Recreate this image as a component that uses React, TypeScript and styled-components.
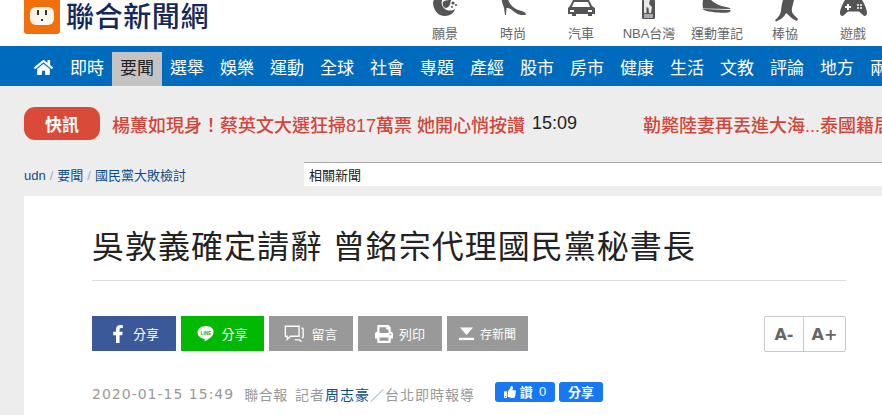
import React from 'react';
import styled, { createGlobalStyle } from 'styled-components';
import { FaHome, FaFacebookF, FaPrint, FaThumbsUp } from 'react-icons/fa';

const CJK = `"Noto Sans CJK TC", "Noto Sans", sans-serif`;

const GlobalStyle = createGlobalStyle`
  html, body {
    margin: 0;
    padding: 0;
    width: 882px;
    height: 415px;
    overflow: hidden;
    background: #ededed;
    font-family: "Liberation Sans", ${CJK};
  }
`;

const Page = styled.div`
  width: 882px;
  height: 415px;
  overflow: hidden;
`;

const Header = styled.header`
  display: flex;
  height: 46px;
  background: #fff;
  overflow: hidden;
`;

const Logo = styled.a`
  display: flex;
  align-items: flex-start;
  gap: 6px;
  flex: none;
  box-sizing: border-box;
  width: 411px;
  padding-left: 24px;
`;

const LogoMark = styled.div`
  display: flex;
  align-items: center;
  justify-content: center;
  width: 36px;
  height: 36px;
  margin-top: -2px;
  background: #f26f0e;
  border-radius: 3px;
`;

const LogoText = styled.span`
  margin-top: -1px;
  font-family: ${CJK};
  font-size: 28px;
  font-weight: 500;
  line-height: 32px;
  letter-spacing: 0.6px;
  color: #14285c;
`;

const Channels = styled.nav`
  display: flex;
  flex: none;
`;

const Channel = styled.a`
  display: flex;
  flex-direction: column;
  align-items: center;
  flex: none;
  width: 68px;
  height: 46px;
`;

const ChannelIcon = styled.svg.attrs({ width: 34, height: 25, viewBox: '0 0 34 25' })`
  display: block;
  flex: none;
  fill: #555;
`;

const ChannelLabel = styled.span`
  font-family: "Liberation Sans", ${CJK};
  font-size: 13px;
  line-height: 18px;
  color: #666;
  white-space: nowrap;
`;

const NavBar = styled.nav`
  display: flex;
  align-items: flex-end;
  height: 40px;
  padding-left: 24px;
  background: #006bbd;
  overflow: hidden;
`;

const HomeLink = styled.a`
  display: flex;
  align-items: center;
  justify-content: center;
  flex: none;
  width: 38px;
  height: 31px;
  padding-bottom: 3px;
  color: #fff;
  font-size: 19px;
`;

const NavItem = styled.a<{ $active?: boolean }>`
  flex: none;
  width: 50px;
  height: 34px;
  font-family: ${CJK};
  font-size: 17px;
  line-height: 29px;
  text-align: center;
  color: ${({ $active }) => ($active ? '#222' : '#fff')};
  background: ${({ $active }) => ($active ? '#c4c4c4' : 'transparent')};
`;

const Flash = styled.div`
  display: flex;
  align-items: center;
  height: 33px;
  margin-top: 21px;
  padding-left: 24px;
  white-space: nowrap;
  overflow: hidden;
`;

const FlashBadge = styled.span`
  flex: none;
  width: 76px;
  height: 33px;
  margin-right: 12px;
  border-radius: 11px;
  background: #d94b38;
  font-family: ${CJK};
  font-size: 17px;
  font-weight: 700;
  line-height: 33px;
  text-align: center;
  color: #fff;
`;

const FlashLink = styled.a`
  flex: none;
  font-family: "Liberation Sans", ${CJK};
  font-size: 18px;
  font-weight: 500;
  color: #d1453a;
`;

const FlashTime = styled.span`
  flex: none;
  margin: 0 66px 0 7px;
  font-size: 18px;
  color: #222;
`;

const CrumbRow = styled.div`
  display: flex;
  align-items: center;
  height: 24px;
  margin-top: 22px;
  padding-left: 24px;
`;

const Crumbs = styled.div`
  flex: none;
  width: 280px;
  font-family: "Liberation Sans", ${CJK};
  font-size: 13px;
  color: #0b4d8c;
`;

const Sep = styled.span`
  margin: 0 4px;
  color: #aaa;
`;

const Related = styled.div`
  flex: 1;
  height: 23px;
  padding-left: 5px;
  background: #fff;
  border-top: 1px solid #aaa;
  font-family: ${CJK};
  font-size: 13px;
  line-height: 23px;
  color: #222;
`;

const Card = styled.main`
  margin: 10px 0 0 24px;
  height: 219px;
  padding: 0 36px 0 68px;
  background: #fff;
`;

const Title = styled.h1`
  margin: 0;
  padding: 28px 0 16px;
  border-bottom: 1px solid #ddd;
  font-family: ${CJK};
  font-size: 32px;
  font-weight: 400;
  line-height: 40px;
  letter-spacing: 1px;
  word-spacing: 1.5px;
  color: #222;
  white-space: nowrap;
`;

const Toolbar = styled.div`
  display: flex;
  align-items: flex-start;
  margin-top: 35px;
`;

const ShareButton = styled.a<{ $bg: string; $w: number; $small?: boolean }>`
  display: flex;
  align-items: center;
  justify-content: center;
  gap: 6px;
  flex: none;
  width: ${({ $w }) => $w}px;
  height: 35px;
  margin-right: 5px;
  background: ${({ $bg }) => $bg};
  font-family: ${CJK};
  font-size: ${({ $small }) => ($small ? 12 : 13)}px;
  color: #fff;
`;

const FontSizer = styled.div`
  display: flex;
  margin-left: auto;
  width: 80px;
  height: 34px;
  border: 1px solid #c8c8c8;
  border-radius: 2px;
`;

const FontBtn = styled.button<{ $w: number; $divider?: boolean }>`
  flex: none;
  width: ${({ $w }) => $w}px;
  padding: 0;
  border: 0;
  border-left: ${({ $divider }) => ($divider ? '1px solid #c8c8c8' : '0')};
  background: none;
  font-family: "DejaVu Sans", sans-serif;
  font-size: 16px;
  font-weight: 700;
  color: #666;
`;

const Meta = styled.div`
  display: flex;
  align-items: flex-start;
  height: 24px;
  margin-top: 30px;
  font-family: ${CJK};
  font-size: 14px;
  line-height: 24px;
  color: #999;
  white-space: nowrap;
`;

const Date = styled.span`
  margin-right: 10px;
  font-family: "DejaVu Sans", sans-serif;
  font-size: 14px;
  letter-spacing: 1px;
`;

const MetaSource = styled.span`
  margin-right: 7px;
  letter-spacing: 0.6px;
`;

const Reporter = styled.span`
  letter-spacing: 1px;
`;

const ReporterName = styled.a`
  color: #0b4d8c;
`;

const FbButton = styled.a<{ $w: number; $left: number }>`
  display: flex;
  align-items: center;
  justify-content: center;
  gap: 4px;
  flex: none;
  width: ${({ $w }) => $w}px;
  height: 20px;
  margin-left: ${({ $left }) => $left}px;
  border-radius: 3px;
  background: #1877f2;
  font-size: 13px;
  font-weight: 700;
  line-height: 20px;
  color: #fff;
`;

const FbCount = styled.span`
  margin-left: 2px;
  font-weight: 400;
  font-family: "Liberation Sans", sans-serif;
`;

const navItems = ['即時', '要聞', '選舉', '娛樂', '運動', '全球', '社會', '專題', '產經', '股市', '房市', '健康', '生活', '文教', '評論', '地方', '兩岸'];

const VisionIcon = () => (
  <ChannelIcon>
    <path d="M5 2c0 8 5 14 12 14 5 0 9-3 10-7-3 2-7 2-10 0-3-2-4-5-3-9H6z" />
    <path d="M15 2c2-2 6-2 8-2-1 4-1 7-5 8-2 0-4-3-3-6z" />
    <circle cx="25" cy="3" r="1.600" />
    <circle cx="28" cy="5" r="1.100" />
    <circle cx="24" cy="7" r="1" />
  </ChannelIcon>
);

const HeelIcon = () => (
  <ChannelIcon>
    <path d="M5.700 0h6.600c1.700 5 5.700 9 11.700 10.500 4 .8 6 2.500 6 4.200-4 .8-7 .3-10-1.700-3-2-6-5-8-5h-1.500L10 15H9L8 8C7 5 6 2 5.700 0z" />
  </ChannelIcon>
);

const CarIcon = () => (
  <ChannelIcon>
    <path d="M9 0h16l3 6 3 2v6h-3v2h-4v-2H12v2H8v-2H4V8l2-2z" />
    <path fill="#fff" d="M10 2h14l2 5H8zM6 10h4v2H6zM24 10h4v2h-4z" />
  </ChannelIcon>
);

const NbaIcon = () => (
  <ChannelIcon>
    <rect x="10" y="0" width="13" height="19" rx="1" fill="#555" />
    <path fill="#e8e8e8" d="M12 0h6l-1 4 3 3-1 6h-2l-.5-5-2-1v6h-2.500z" />
    <rect x="12" y="14" width="9" height="4" fill="#aaa" />
  </ChannelIcon>
);

const SneakerIcon = () => (
  <ChannelIcon>
    <path d="M3 0h8c3 3 9 6 15 7 3 .5 4 1 4.500 2L3 8.500C2.500 6 2.500 3 3 0z" />
    <path d="M2.300 9l28.400 1c0 2-1.700 2.500-4.700 2.700-7 .3-16-.7-21-2.200z" />
  </ChannelIcon>
);

const BatterIcon = () => (
  <ChannelIcon>
    <path d="M15 0h11l-2 8c-.5 3 0 5 2 7l4 4-1 2c-3-1-6-3-8.500-6L18 13c-1.500 4-6 7-10 8.500L7 20c3-2 5.500-6 6-9 .5-5 1-8 2-11z" />
  </ChannelIcon>
);

const GameIcon = () => (
  <ChannelIcon>
    <path d="M9 0h17c2 3 5 9 5 13 0 2.500-2 3.500-3.500 2.500L23 11.500H12l-4.500 4C6 16.500 4 15.500 4 13c0-4 3-10 5-13z" />
    <path fill="#fff" d="M11 4h2v2h2v2h-2v2h-2V8H9V6h2z" />
    <g fill="#fff">
      <circle cx="22" cy="5" r="1" />
      <circle cx="25" cy="5" r="1" />
      <circle cx="22" cy="8" r="1" />
      <circle cx="25" cy="8" r="1" />
    </g>
  </ChannelIcon>
);

const PlugFace = () => (
  <svg width="24" height="18" viewBox="0 0 24 18">
    <rect x="0" y="0" width="24" height="18" rx="6" fill="#fbf4ea" />
    <rect x="7" y="3" width="2" height="5" fill="#333" />
    <rect x="15" y="3" width="2" height="5" fill="#333" />
    <rect x="11" y="12" width="2" height="2" fill="#333" />
  </svg>
);

const LineIcon = () => (
  <svg width="18" height="18" viewBox="0 0 17 17">
    <path fill="#fff" d="M8.500 1C4 1 .5 3.700.5 7.200c0 3 2.700 5.400 6.200 5.900.8.200.5 1 .4 1.600 0 .5.300.7.800.4 1.500-.8 4.400-2.700 6-4.300 1.300-1.200 1.600-2.400 1.600-3.600C16.500 3.700 13 1 8.500 1z" />
    <text x="8.500" y="9" fontSize="4.500" fontWeight="700" fontFamily="Liberation Sans" textAnchor="middle" fill="#00b900">LINE</text>
  </svg>
);

const CommentIcon = () => (
  <svg width="21" height="19" viewBox="0 0 23 20" fill="none" stroke="#fff" strokeWidth="1.500">
    <path d="M1.500 2h15v11H7l-3.500 3.500V13h-2z" />
    <path d="M19 4c1.500 0 2 .5 2 2v8l-1.500 1M12 17h5l2 2" />
  </svg>
);

const SaveIcon = () => (
  <svg width="15" height="14" viewBox="0 0 16 14" fill="#fff">
    <path d="M1 0h14L8 8z" />
    <rect x="0" y="11" width="16" height="2.500" />
  </svg>
);

const channels: { label: string; icon: React.ReactNode }[] = [
  { label: '願景', icon: <VisionIcon /> },
  { label: '時尚', icon: <HeelIcon /> },
  { label: '汽車', icon: <CarIcon /> },
  { label: 'NBA台灣', icon: <NbaIcon /> },
  { label: '運動筆記', icon: <SneakerIcon /> },
  { label: '棒協', icon: <BatterIcon /> },
  { label: '遊戲', icon: <GameIcon /> },
];

const App: React.FC = () => (
  <Page>
    <GlobalStyle />
    <Header>
      <Logo>
        <LogoMark>
          <PlugFace />
        </LogoMark>
        <LogoText>聯合新聞網</LogoText>
      </Logo>
      <Channels>
        {channels.map((c) => (
          <Channel key={c.label}>
            {c.icon}
            <ChannelLabel>{c.label}</ChannelLabel>
          </Channel>
        ))}
      </Channels>
    </Header>

    <NavBar>
      <HomeLink>
        <FaHome />
      </HomeLink>
      {navItems.map((item) => (
        <NavItem key={item} $active={item === '要聞'}>
          {item}
        </NavItem>
      ))}
    </NavBar>

    <Flash>
      <FlashBadge>快訊</FlashBadge>
      <FlashLink>楊蕙如現身！蔡英文大選狂掃817萬票 她開心悄按讚</FlashLink>
      <FlashTime>15:09</FlashTime>
      <FlashLink>勒斃陸妻再丟進大海...泰國籍居</FlashLink>
    </Flash>

    <CrumbRow>
      <Crumbs>
        udn<Sep>/</Sep>要聞<Sep>/</Sep>國民黨大敗檢討
      </Crumbs>
      <Related>相關新聞</Related>
    </CrumbRow>

    <Card>
      <Title>吳敦義確定請辭 曾銘宗代理國民黨秘書長</Title>
      <Toolbar>
        <ShareButton $bg="#3b5998" $w={84}>
          <FaFacebookF size={18} />
          分享
        </ShareButton>
        <ShareButton $bg="#00b900" $w={83}>
          <LineIcon />
          分享
        </ShareButton>
        <ShareButton $bg="#999" $w={84}>
          <CommentIcon />
          留言
        </ShareButton>
        <ShareButton $bg="#999" $w={84}>
          <FaPrint size={18} />
          列印
        </ShareButton>
        <ShareButton $bg="#999" $w={81} $small>
          <SaveIcon />
          存新聞
        </ShareButton>
        <FontSizer>
          <FontBtn $w={38}>A-</FontBtn>
          <FontBtn $w={42} $divider>A+</FontBtn>
        </FontSizer>
      </Toolbar>
      <Meta>
        <Date>2020-01-15 15:49</Date>
        <MetaSource>聯合報</MetaSource>
        <Reporter>
          記者<ReporterName>周志豪</ReporterName>／台北即時報導
        </Reporter>
        <FbButton $w={60} $left={20}>
          <FaThumbsUp size={12} />
          讚<FbCount>0</FbCount>
        </FbButton>
        <FbButton $w={44} $left={4}>
          分享
        </FbButton>
      </Meta>
    </Card>
  </Page>
);

export default App;
